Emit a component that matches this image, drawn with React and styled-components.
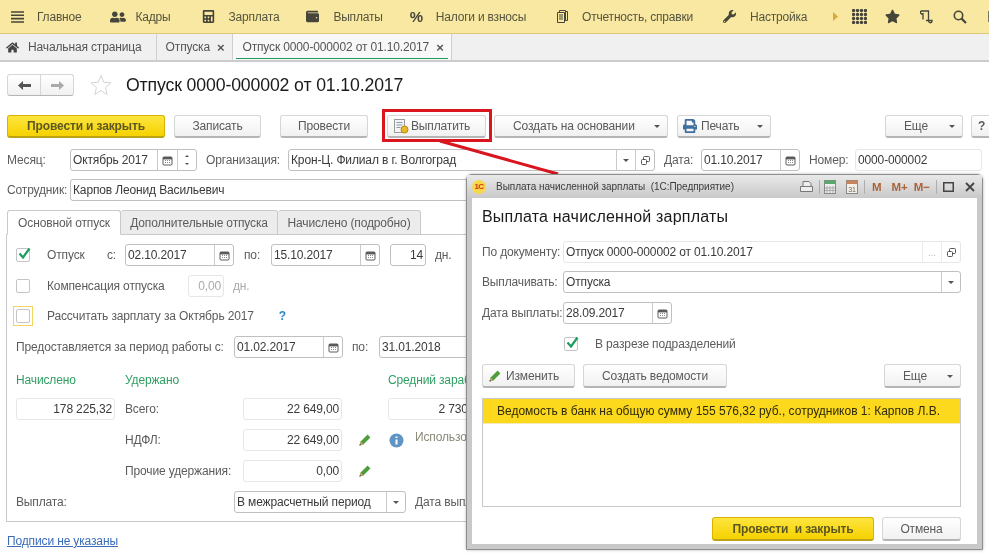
import styled, { createGlobalStyle } from 'styled-components'
import { FaHome, FaCalculator, FaWallet, FaWrench, FaStar, FaUserFriends, FaPrint } from 'react-icons/fa'

const GlobalStyle = createGlobalStyle`
  * {
    box-sizing: border-box;
  }

  html, body {
    margin: 0;
    padding: 0;
    background: #fff;
  }

  body {
    font-family: "Liberation Sans", Arial, sans-serif;
    font-size: 12px;
    color: #4d4d4d;
  }
`

const Page = styled.div`
  position: relative;
  width: 989px;
  height: 556px;
  overflow: hidden;
  background: #fff;
  letter-spacing: -0.14px;
  filter: blur(0.35px);
`

/* top section bar */
const TopBar = styled.div`
  height: 34px;
  display: flex;
  align-items: center;
  padding-left: 11px;
  background: #f8e8a2;
  border-bottom: 1px solid #dcc97c;
  white-space: nowrap;
  letter-spacing: -0.2px;
`

const NavItem = styled.div`
  display: flex;
  align-items: center;
  flex: none;
  gap: ${p => p.$gap ?? 13}px;
  margin-right: ${p => p.$right ?? 29}px;
  color: #55543f;
  svg {
    display: block;
    color: #45453a;
  }
`

const IconSlot = styled.div`
  display: flex;
  align-items: center;
  flex: none;
  margin-right: ${p => p.$right ?? 18}px;
  color: #45453a;
`

const Percent = styled.span`
  font-size: 15px;
  font-weight: bold;
  color: #45453a;
`

/* open windows bar */
const WindowBar = styled.div`
  height: 28px;
  display: flex;
  background: #f0f0f0;
  border-bottom: 2px solid #cccccc;
`

const WinTab = styled.div`
  position: relative;
  display: flex;
  align-items: center;
  padding: 0 ${p => p.$pr ?? 8}px 0 ${p => p.$pl ?? 9}px;
  gap: ${p => p.$gap ?? 7}px;
  background: ${p => (p.$active ? '#f8f8f8' : 'transparent')};
  border-right: 1px solid #cfcfcf;
  color: #555;
  white-space: nowrap;
  svg {
    display: block;
  }
  ${p =>
    p.$active &&
    `
    &:after {
      content: '';
      position: absolute;
      left: 3px;
      right: 3px;
      bottom: 1px;
      height: 1px;
      background: #1f9c5b;
    }
  `}
`

const CloseMark = styled.span`
  font-size: 13px;
  font-weight: bold;
  color: #555;
`

/* document header */
const DocHeader = styled.div`
  height: 50px;
  padding: 12px 0 0 7px;
  display: flex;
  align-items: flex-start;
`

const NavGroup = styled.div`
  width: 67px;
  height: 22px;
  display: flex;
  border: 1px solid #d6d6d6;
  border-bottom-color: #b5b5b5;
  border-radius: 3px;
  background: linear-gradient(#fff, #f1f1f1);
`

const NavCell = styled.div`
  flex: 1;
  display: flex;
  align-items: center;
  justify-content: center;
  & + & {
    border-left: 1px solid #d6d6d6;
  }
`

const StarBox = styled.div`
  margin: 0 14px 0 16px;
  width: 22px;
  height: 22px;
`

const DocTitle = styled.div`
  font-size: 17.7px;
  line-height: 22px;
  color: #1a1a1a;
`

/* command bar */
const CommandBar = styled.div`
  display: flex;
  padding: 3px 0 0 7px;
  height: 37px;
  align-items: flex-start;
`

const Button = styled.div`
  width: ${p => p.$w}px;
  height: ${p => p.$h ?? 23}px;
  margin-left: ${p => p.$ml ?? 0}px;
  padding: ${p => p.$pad ?? '0'};
  flex: none;
  display: flex;
  align-items: center;
  justify-content: ${p => p.$justify ?? 'center'};
  gap: ${p => p.$gap ?? 4}px;
  position: relative;
  border: 1px solid #d6d6d6;
  border-bottom: 2px solid #b5b5b5;
  border-radius: 3px;
  background: linear-gradient(#ffffff, #f1f1f1);
  color: #5a5a5a;
  white-space: nowrap;
`

const PrimaryButton = styled(Button)`
  border: 1px solid #d8b400;
  border-bottom: 2px solid #bda214;
  background: linear-gradient(#fde53f, #f6d200);
  color: #5c5720;
  font-weight: bold;
`

const Caret = styled.span`
  position: absolute;
  right: ${p => p.$right ?? 7}px;
  top: 50%;
  margin-top: -1px;
  width: 0;
  height: 0;
  border-left: 3px solid transparent;
  border-right: 3px solid transparent;
  border-top: 3px solid #555;
`

/* form rows */
const Row = styled.div`
  display: flex;
  align-items: center;
  height: ${p => p.$h ?? 22}px;
  margin-top: ${p => p.$mt ?? 0}px;
  padding-left: ${p => p.$pl ?? 0}px;
  white-space: nowrap;
`

const Label = styled.div`
  width: ${p => (p.$w ? `${p.$w}px` : 'auto')};
  margin-left: ${p => p.$ml ?? 0}px;
  flex: none;
  color: ${p => p.$color ?? '#5c5c5c'};
  ${p => p.$muted && 'color: #aaa;'}
`

const Field = styled.div`
  width: ${p => p.$w}px;
  height: ${p => p.$h ?? 22}px;
  margin-left: ${p => p.$ml ?? 0}px;
  flex: ${p => (p.$grow ? 1 : 'none')};
  display: flex;
  align-items: stretch;
  background: #fff;
  border: 1px solid ${p => (p.$ro ? '#e6e6e6' : '#c0c0c0')};
  border-radius: 3px;
  overflow: hidden;
`

const FieldText = styled.div`
  flex: 1;
  min-width: 0;
  padding: 0 2px;
  line-height: 20px;
  color: ${p => p.$color ?? '#3a3a3a'};
  text-align: ${p => p.$align ?? 'left'};
  overflow: hidden;
  white-space: nowrap;
`

const Addon = styled.div`
  width: ${p => p.$w ?? 19}px;
  flex: none;
  display: flex;
  align-items: center;
  justify-content: center;
  border-left: 1px solid ${p => (p.$ro ? '#ececec' : '#cacaca')};
  color: #666;
  position: relative;
  svg {
    display: block;
  }
`

const Dots = styled.span`
  color: #bbb;
  font-size: 10px;
`

const DownMark = styled.span`
  width: 0;
  height: 0;
  border-left: 3px solid transparent;
  border-right: 3px solid transparent;
  border-top: 3px solid #555;
`

const Spin = styled.div`
  flex: 1;
  display: flex;
  flex-direction: column;
  align-items: center;
  justify-content: center;
  gap: 6px;
  &:before {
    content: '';
    border-left: 2px solid transparent;
    border-right: 2px solid transparent;
    border-bottom: 2px solid #555;
  }
  &:after {
    content: '';
    border-left: 2px solid transparent;
    border-right: 2px solid transparent;
    border-top: 2px solid #555;
  }
`

const Check = styled.div`
  width: 14px;
  height: 14px;
  flex: none;
  margin-left: ${p => p.$ml ?? 0}px;
  margin-right: ${p => p.$mr ?? 0}px;
  position: relative;
  border: 1px solid #c4c4c4;
  border-radius: 2px;
  background: #fff;
  svg {
    position: absolute;
    left: 0;
    top: -3px;
  }
`

const FocusRing = styled.div`
  width: 20px;
  height: 20px;
  flex: none;
  margin-left: -3px;
  margin-right: 14px;
  display: flex;
  align-items: center;
  justify-content: center;
  border: 1px solid #f1d55c;
`

/* document tabs */
const TabsRow = styled.div`
  display: flex;
  margin: 9px 0 0 7px;
  height: 25px;
  position: relative;
  z-index: 1;
`

const FormTab = styled.div`
  width: ${p => p.$w}px;
  display: flex;
  align-items: center;
  justify-content: center;
  border: 1px solid #c9c9c9;
  border-bottom: ${p => (p.$active ? '1px solid #fff' : '1px solid #c9c9c9')};
  border-left-width: ${p => (p.$first ? 1 : 0)}px;
  border-radius: 3px 3px 0 0;
  background: ${p => (p.$active ? '#fff' : '#ececec')};
  color: #5c5c5c;
`

const TabPanel = styled.div`
  margin: -1px 0 0 6px;
  width: 976px;
  height: 288px;
  padding: 9px 0 0 9px;
  border: 1px solid #c9c9c9;
`

const GreenHead = styled(Label)`
  color: #2f9e62;
`

const Pencil = styled.div`
  width: 14px;
  height: 14px;
  margin-left: ${p => p.$ml ?? 16}px;
  flex: none;
  svg {
    display: block;
  }
`

const InfoIcon = styled.svg`
  margin-left: 17px;
  flex: none;
`

const Link = styled.div`
  margin: 12px 0 0 7px;
  color: #3a6cb8;
  text-decoration: underline;
`

const HelpMark = styled.span`
  margin-left: 25px;
  color: #2a86c8;
  font-weight: bold;
`

const Note = styled.div`
  color: #8a8a78;
  margin-left: 11px;
  margin-top: -6px;
`

/* overlay highlight */
const RedBox = styled.div`
  position: absolute;
  left: 382px;
  top: 109px;
  width: 110px;
  height: 33px;
  border: 3px solid #d9161f;
`

const Arrow = styled.svg`
  position: absolute;
  left: 430px;
  top: 135px;
`

/* modal window */
const Dialog = styled.div`
  position: absolute;
  left: 466px;
  top: 174px;
  width: 517px;
  height: 376px;
  display: flex;
  flex-direction: column;
  padding: 0 5px 5px;
  background: #c9c9c9;
  border: 1px solid #8e8e8e;
  border-top-left-radius: 6px;
  border-top-right-radius: 6px;
  box-shadow: 0 0 3px rgba(0, 0, 0, 0.3);
`

const DialogTitle = styled.div`
  height: 23px;
  flex: none;
  display: flex;
  align-items: center;
  margin: 0 -5px;
  padding: 0 7px 0 5px;
  background: linear-gradient(#e9e9e9, #c9c9c9);
  font-size: 10px;
  letter-spacing: -0.04px;
  color: #3c3c3c;
  white-space: nowrap;
`

const LogoBadge = styled.div`
  width: 14px;
  height: 14px;
  margin-right: 10px;
  flex: none;
  display: flex;
  align-items: center;
  justify-content: center;
  border-radius: 50%;
  background: #f7d84a;
  color: #d2301e;
  font-size: 8px;
  font-weight: bold;
  letter-spacing: -0.5px;
`

const TitleTools = styled.div`
  margin-left: auto;
  display: flex;
  align-items: center;
  svg {
    display: block;
  }
`

const ToolCell = styled.div`
  margin-left: ${p => p.$ml ?? 0}px;
  display: flex;
  align-items: center;
  justify-content: center;
`

const ToolSep = styled.div`
  width: 1px;
  height: 14px;
  margin-left: ${p => p.$ml ?? 5}px;
  background: #aeaeae;
`

const MemText = styled.span`
  font-size: 11.5px;
  font-weight: bold;
  color: #a8643c;
`

const DialogBody = styled.div`
  flex: 1;
  padding: 0 16px 0 10px;
  background: #fff;
  display: flex;
  flex-direction: column;
`

const DialogHeading = styled.div`
  margin-top: 7px;
  height: 24px;
  font-size: 16px;
  line-height: 24px;
  letter-spacing: 0.2px;
  color: #1a1a1a;
`

const TableBox = styled.div`
  margin-top: 10px;
  height: 109px;
  border: 1px solid #c9c9c9;
  flex: none;
`

const TableRow = styled.div`
  height: 25px;
  padding-left: 14px;
  line-height: 24px;
  background: #fcd91c;
  border-bottom: 1px solid #f3eab8;
  color: #2e2a0a;
  letter-spacing: 0;
  white-space: nowrap;
`

const Spacer = styled.div`
  flex: 1;
`

function CalendarIcon() {
  return (
    <svg width="11" height="11" viewBox="0 0 11 11">
      <rect x="1" y="2" width="9" height="8" rx="1" fill="none" stroke="#5a5a5a" />
      <rect x="1" y="2" width="9" height="2.4" fill="#5a5a5a" />
      <path d="M3 5.5h5M3 7.5h5" stroke="#8a8a8a" strokeDasharray="1 1" />
    </svg>
  )
}

function OpenIcon() {
  return (
    <svg width="11" height="11" viewBox="0 0 11 11" fill="none" stroke="#555">
      <rect x="3.5" y="1.5" width="6" height="5" rx="1" />
      <rect x="1.5" y="4.5" width="5" height="5" rx="1" fill="#fff" />
    </svg>
  )
}

function CheckMark() {
  return (
    <svg width="15" height="15" viewBox="0 0 15 15">
      <path d="M2.5 7.5 6 11.5 12.5 2.5" fill="none" stroke="#1f9c5b" strokeWidth="2.2" />
    </svg>
  )
}

function PencilIcon() {
  return (
    <svg width="14" height="14" viewBox="0 0 14 14">
      <path d="M1.5 12.5 2.6 8.6 9.6 1.6 12.4 4.4 5.4 11.4Z" fill="#4f9e3c" />
      <path d="M1.5 12.5 2.6 8.6 5.4 11.4Z" fill="#c9a572" />
      <path d="M1.5 12.5 2 10.8 3.2 12Z" fill="#444" />
    </svg>
  )
}

function DateField({ value, w, ml, ro }) {
  return (
    <Field $w={w} $ml={ml} $ro={ro}>
      <FieldText>{value}</FieldText>
      <Addon><CalendarIcon /></Addon>
    </Field>
  )
}

function AmountField({ value, w = 99, ml }) {
  return (
    <Field $w={w} $ml={ml} $ro>
      <FieldText $align="right">{value}</FieldText>
    </Field>
  )
}

const gridDots = [1.6, 5.6, 9.6, 13.6].flatMap(x => [1.6, 5.6, 9.6, 13.6].map(y => [x, y]))

function App() {
  return (
    <>
      <GlobalStyle />
      <Page>
        <TopBar>
          <NavItem>
            <svg width="13" height="12" viewBox="0 0 13 12"><path d="M0 1h13M0 4.3h13M0 7.6h13M0 11h13" stroke="#45453a" strokeWidth="1.6" /></svg>
            Главное
          </NavItem>
          <NavItem $gap={9} $right={32}><FaUserFriends size={16} />Кадры</NavItem>
          <NavItem $right={27}><FaCalculator size={13} />Зарплата</NavItem>
          <NavItem $gap={14} $right={27}><FaWallet size={13} />Выплаты</NavItem>
          <NavItem $right={31}>
            <Percent>%</Percent>
            Налоги и взносы
          </NavItem>
          <NavItem $gap={14} $right={30}>
            <svg width="11" height="13" viewBox="0 0 11 13" fill="none" stroke="#45453a"><path d="M.5 2.5h7v10h-7zM2.5 2.5v-2h6v10h-1M8.5 1.500h2v9h-2M2 5h4M2 7h4M2 9h4" /></svg>
            Отчетность, справки
          </NavItem>
          <NavItem $gap={14} $right={26}><FaWrench size={13} />Настройка</NavItem>
          <IconSlot $right={14}>
            <svg width="5" height="9" viewBox="0 0 5 9"><path d="M0 0l5 4.500-5 4.500z" fill="#d9a93a" /></svg>
          </IconSlot>
          <IconSlot>
            <svg width="15" height="15" viewBox="0 0 15.200 15.200" fill="#45453a">
              {gridDots.map(([x, y]) => <circle key={`${x}-${y}`} cx={x} cy={y} r="1.700" />)}
            </svg>
          </IconSlot>
          <IconSlot $right={20}><FaStar size={15} /></IconSlot>
          <IconSlot $right={19}>
            <svg width="14" height="14" viewBox="0 0 14 14" fill="none" stroke="#45453a" strokeWidth="1.300"><path d="M1 1h7.500v10a1.800 1.800 0 0 0 3.500 .5V10.500H6M1 1a1.500 1.500 0 0 0 2 2.500M3 3v6.500" /></svg>
          </IconSlot>
          <IconSlot $right={19}>
            <svg width="14" height="14" viewBox="0 0 14 14" fill="none" stroke="#45453a" strokeWidth="1.600"><circle cx="5.500" cy="5.500" r="4.200" /><path d="M8.500 8.500 13 13" strokeWidth="2.200" /></svg>
          </IconSlot>
          <IconSlot>
            <svg width="14" height="14" viewBox="0 0 14 14"><path d="M2 1h3v8h3v3H2z" fill="#7a7a66" /></svg>
          </IconSlot>
        </TopBar>

        <WindowBar>
          <WinTab $pl={6} $pr={14} $gap={9}><FaHome size={13} color="#444" />Начальная страница</WinTab>
          <WinTab><span>Отпуска</span><CloseMark>×</CloseMark></WinTab>
          <WinTab $active $pr={7}><span>Отпуск 0000-000002 от 01.10.2017</span><CloseMark>×</CloseMark></WinTab>
        </WindowBar>

        <DocHeader>
          <NavGroup>
            <NavCell>
              <svg width="13" height="9" viewBox="0 0 13 9"><path d="M0 4.500 5 0v3h8v3H5v3z" fill="#555" /></svg>
            </NavCell>
            <NavCell>
              <svg width="13" height="9" viewBox="0 0 13 9"><path d="M13 4.500 8 0v3H0v3h8v3z" fill="#aaa" /></svg>
            </NavCell>
          </NavGroup>
          <StarBox>
            <svg width="22" height="22" viewBox="0 0 22 22"><path d="M11 1.500 13.800 8.300 21 8.800 15.500 13.500 17.200 20.500 11 16.700 4.800 20.500 6.500 13.500 1 8.800 8.200 8.300Z" fill="#fff" stroke="#d4d4d4" /></svg>
          </StarBox>
          <DocTitle>Отпуск 0000-000002 от 01.10.2017</DocTitle>
        </DocHeader>

        <CommandBar>
          <PrimaryButton $w={158}>Провести и закрыть</PrimaryButton>
          <Button $w={87} $ml={9}>Записать</Button>
          <Button $w={88} $ml={19}>Провести</Button>
          <Button $w={99} $ml={19} $justify="flex-start" $pad="0 0 0 5px" $gap={2}>
            <svg width="16" height="16" viewBox="0 0 16 16">
              <rect x="1.500" y="1.500" width="10" height="13" fill="#f4f4f4" stroke="#9a9a9a" />
              <path d="M3.500 4.500h6M3.500 7h6M3.500 9.500h4" stroke="#8a9ab0" />
              <circle cx="11.500" cy="11.500" r="3.500" fill="#eab92a" stroke="#b98a12" />
            </svg>
            Выплатить
          </Button>
          <Button $w={174} $ml={8} $justify="flex-start" $pad="0 0 0 18px">Создать на основании<Caret /></Button>
          <Button $w={94} $ml={9} $justify="flex-start" $pad="0 0 0 5px" $gap={4}>
            <FaPrint size={14} color="#3f6f9c" />Печать<Caret />
          </Button>
          <Button $w={78} $ml={114} $justify="flex-start" $pad="0 0 0 18px">Еще<Caret /></Button>
          <Button $w={30} $ml={8} $justify="flex-start" $pad="0 0 0 6px"><b>?</b></Button>
        </CommandBar>

        <Row $pl={7}>
          <Label $w={63}>Месяц:</Label>
          <Field $w={127}>
            <FieldText>Октябрь 2017</FieldText>
            <Addon $w={20}><CalendarIcon /></Addon>
            <Addon $w={19}><Spin /></Addon>
          </Field>
          <Label $ml={9} $w={82}>Организация:</Label>
          <Field $w={367}>
            <FieldText>Крон-Ц. Филиал в г. Волгоград</FieldText>
            <Addon><DownMark /></Addon>
            <Addon><OpenIcon /></Addon>
          </Field>
          <Label $ml={9} $w={37}>Дата:</Label>
          <DateField value="01.10.2017" w={99} />
          <Label $ml={9} $w={46}>Номер:</Label>
          <Field $w={127} $ro><FieldText>0000-000002</FieldText></Field>
        </Row>

        <Row $pl={7} $mt={8}>
          <Label $w={63}>Сотрудник:</Label>
          <Field $w={912}><FieldText>Карпов Леонид Васильевич</FieldText></Field>
        </Row>

        <TabsRow>
          <FormTab $w={114} $first $active>Основной отпуск</FormTab>
          <FormTab $w={157}>Дополнительные отпуска</FormTab>
          <FormTab $w={143}>Начислено (подробно)</FormTab>
        </TabsRow>

        <TabPanel>
          <Row>
            <Check $mr={17}><CheckMark /></Check>
            <Label $w={60}>Отпуск</Label>
            <Label $w={18}>с:</Label>
            <DateField value="02.10.2017" w={109} />
            <Label $ml={10} $w={27}>по:</Label>
            <DateField value="15.10.2017" w={109} />
            <Field $w={36} $ml={10}><FieldText $align="right">14</FieldText></Field>
            <Label $ml={9}>дн.</Label>
          </Row>
          <Row $mt={9}>
            <Check $mr={17} />
            <Label $w={141}>Компенсация отпуска</Label>
            <Field $w={36} $ro><FieldText $align="right" $color="#aaa">0,00</FieldText></Field>
            <Label $ml={9} $muted>дн.</Label>
          </Row>
          <Row $mt={8}>
            <FocusRing><Check /></FocusRing>
            <Label>Рассчитать зарплату за Октябрь 2017</Label>
            <HelpMark>?</HelpMark>
          </Row>
          <Row $mt={9}>
            <Label $w={218}>Предоставляется за период работы с:</Label>
            <DateField value="01.02.2017" w={109} />
            <Label $ml={9} $w={27}>по:</Label>
            <DateField value="31.01.2018" w={109} />
          </Row>
          <Row $mt={11}>
            <GreenHead $w={109}>Начислено</GreenHead>
            <GreenHead $w={263}>Удержано</GreenHead>
            <GreenHead>Средний заработок</GreenHead>
          </Row>
          <Row $mt={7}>
            <AmountField value="178 225,32" />
            <Label $ml={10} $w={118}>Всего:</Label>
            <AmountField value="22 649,00" />
            <AmountField value="2 730,00" ml={46} />
          </Row>
          <Row $mt={9}>
            <Label $ml={109} $w={118}>НДФЛ:</Label>
            <AmountField value="22 649,00" />
            <Pencil><PencilIcon /></Pencil>
            <InfoIcon width="15" height="15" viewBox="0 0 15 15">
              <circle cx="7.500" cy="7.500" r="7" fill="#5f94c4" />
              <path d="M7.500 3.500v1.500M7.500 6.500v5" stroke="#fff" strokeWidth="2" />
            </InfoIcon>
            <Note>Использовать</Note>
          </Row>
          <Row $mt={9}>
            <Label $ml={109} $w={118}>Прочие удержания:</Label>
            <AmountField value="0,00" />
            <Pencil><PencilIcon /></Pencil>
          </Row>
          <Row $mt={9}>
            <Label $w={218}>Выплата:</Label>
            <Field $w={172}>
              <FieldText>В межрасчетный период</FieldText>
              <Addon><DownMark /></Addon>
            </Field>
            <Label $ml={9}>Дата выплаты:</Label>
          </Row>
        </TabPanel>

        <Link>Подписи не указаны</Link>

        <Arrow width="140" height="50" viewBox="0 0 140 50">
          <path d="M10 6 128 39" stroke="#d9161f" strokeWidth="3" />
        </Arrow>
        <RedBox />

        <Dialog>
          <DialogTitle>
            <LogoBadge>1С</LogoBadge>
            Выплата начисленной зарплаты&nbsp; (1С:Предприятие)
            <TitleTools>
              <ToolCell>
                <svg width="15" height="14" viewBox="0 0 15 14" fill="#eee" stroke="#777"><path d="M4 1.500h6l2 2v3H4zM1.500 6.500h12v5h-12z" /></svg>
              </ToolCell>
              <ToolSep />
              <ToolCell $ml={4}>
                <svg width="12" height="14" viewBox="0 0 12 14"><rect x=".5" y=".5" width="11" height="13" fill="#eee" stroke="#888" /><rect x=".5" y=".5" width="11" height="3.500" fill="#5aa86a" /><path d="M3 6v7M6 6v7M9 6v7M1 8h10M1 10.500h10" stroke="#aaa" /></svg>
              </ToolCell>
              <ToolCell $ml={10}>
                <svg width="12" height="14" viewBox="0 0 12 14"><rect x=".5" y=".5" width="11" height="13" fill="#f4f0e8" stroke="#888" /><rect x=".5" y=".5" width="11" height="3.500" fill="#c9835c" /><text x="6" y="12" fontSize="7" textAnchor="middle" fill="#666" fontFamily="Liberation Sans">31</text></svg>
              </ToolCell>
              <ToolSep $ml={6} />
              <ToolCell $ml={7}><MemText>M</MemText></ToolCell>
              <ToolCell $ml={10}><MemText>M+</MemText></ToolCell>
              <ToolCell $ml={6}><MemText>M−</MemText></ToolCell>
              <ToolSep $ml={6} />
              <ToolCell $ml={6}>
                <svg width="11" height="10" viewBox="0 0 11 10"><rect x=".75" y=".75" width="9.500" height="8.500" fill="none" stroke="#444" strokeWidth="1.500" /></svg>
              </ToolCell>
              <ToolCell $ml={11}>
                <svg width="10" height="10" viewBox="0 0 10 10"><path d="M1 1l8 8M9 1 1 9" stroke="#444" strokeWidth="1.800" /></svg>
              </ToolCell>
            </TitleTools>
          </DialogTitle>
          <DialogBody>
            <DialogHeading>Выплата начисленной зарплаты</DialogHeading>
            <Row $mt={12}>
              <Label $w={81}>По документу:</Label>
              <Field $grow $ro>
                <FieldText>Отпуск 0000-000002 от 01.10.2017</FieldText>
                <Addon $ro $w={19}><Dots>...</Dots></Addon>
                <Addon $ro $w={19}><OpenIcon /></Addon>
              </Field>
            </Row>
            <Row $mt={8}>
              <Label $w={81}>Выплачивать:</Label>
              <Field $grow>
                <FieldText>Отпуска</FieldText>
                <Addon><DownMark /></Addon>
              </Field>
            </Row>
            <Row $mt={9}>
              <Label $w={81}>Дата выплаты:</Label>
              <DateField value="28.09.2017" w={109} />
            </Row>
            <Row $mt={8} $h={23}>
              <Check $ml={82} $mr={17}><CheckMark /></Check>
              <Label>В разрезе подразделений</Label>
            </Row>
            <Row $mt={9} $h={24}>
              <Button $w={93} $h={24} $justify="flex-start" $pad="0 0 0 5px" $gap={4}><PencilIcon />Изменить</Button>
              <Button $w={144} $h={24} $ml={8}>Создать ведомости</Button>
              <Button $w={77} $h={24} $ml={157} $justify="flex-start" $pad="0 0 0 18px">Еще<Caret /></Button>
            </Row>
            <TableBox>
              <TableRow>Ведомость в банк на общую сумму 155 576,32 руб., сотрудников 1: Карпов Л.В.</TableRow>
            </TableBox>
            <Row $mt={10} $h={24}>
              <Spacer />
              <PrimaryButton $w={162} $h={24}>Провести&nbsp; и закрыть</PrimaryButton>
              <Button $w={79} $h={24} $ml={8}>Отмена</Button>
            </Row>
          </DialogBody>
        </Dialog>
      </Page>
    </>
  )
}

export default App
